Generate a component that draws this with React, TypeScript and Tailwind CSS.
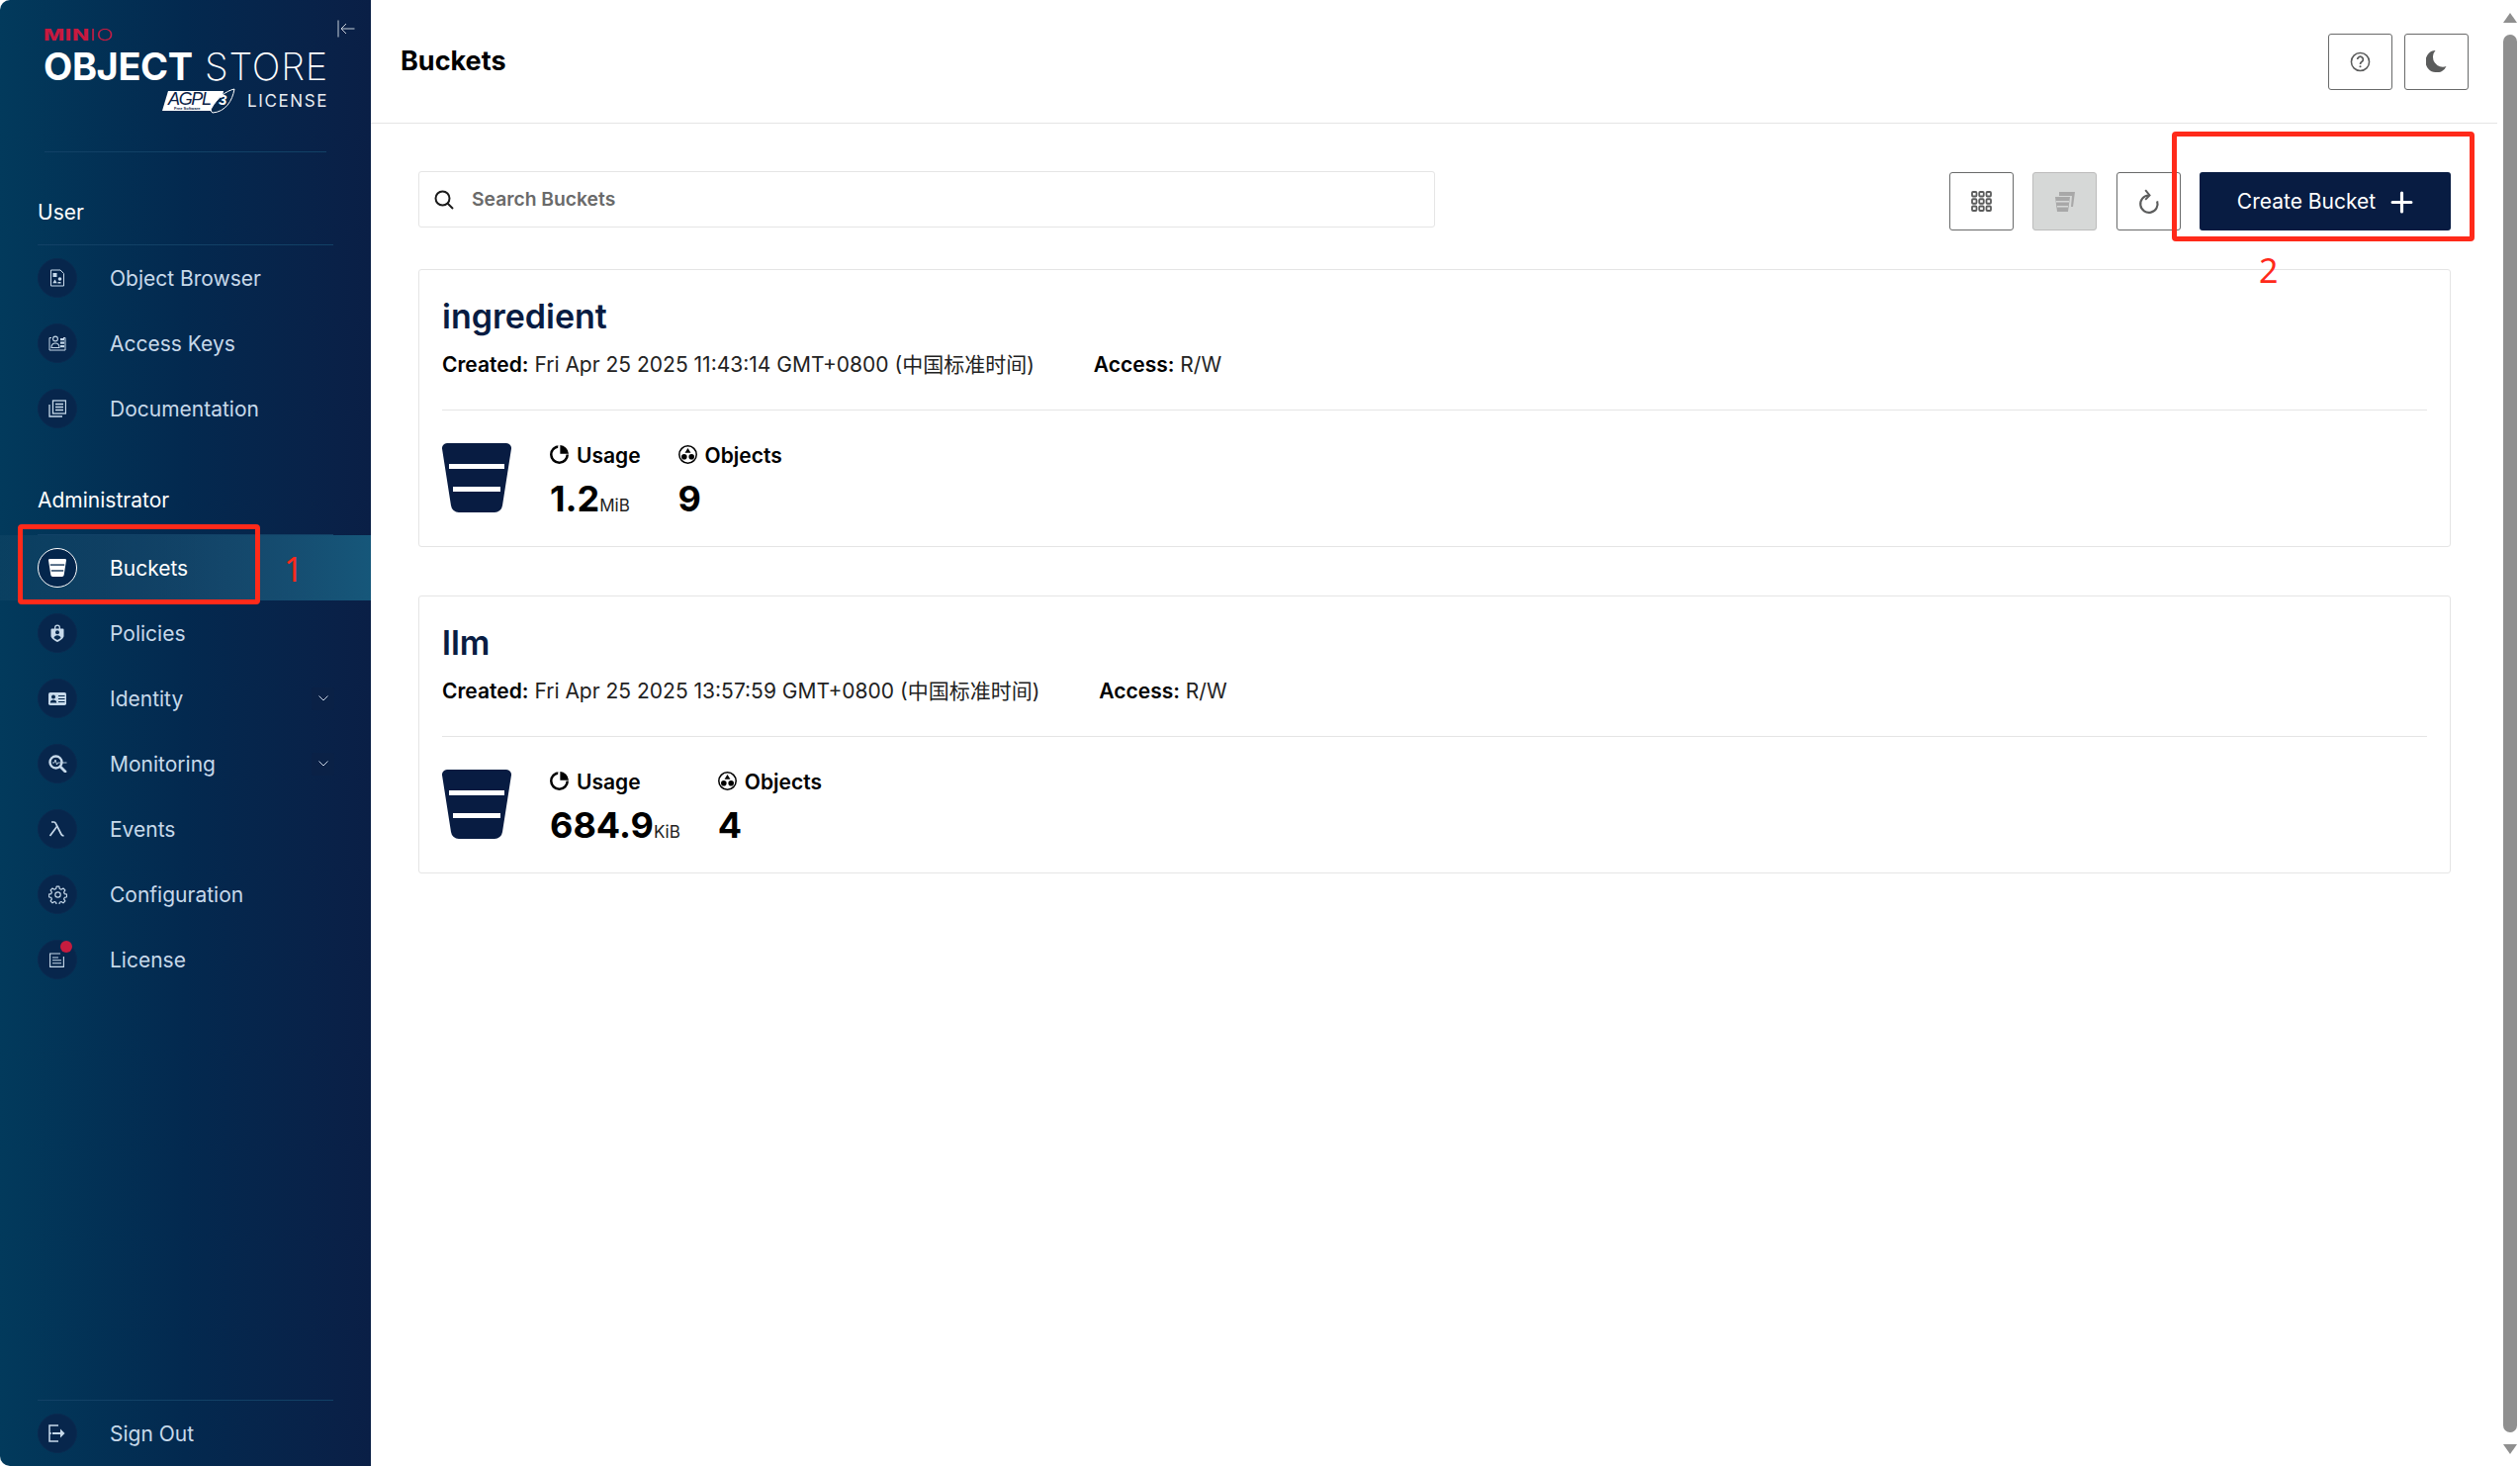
import type { ReactNode } from 'react';

const BucketShape = ({ className, stripe = '#fff' }: { className?: string; stripe?: string }) => (
  <svg viewBox="0 0 70 70" className={className}>
    <path d="M5 0h60a5 5 0 0 1 5 5.500L61 63a8 8 0 0 1-8 7H17a8 8 0 0 1-8-7L0 5.500A5 5 0 0 1 5 0Z" fill="currentColor" />
    <rect x="7" y="21" width="56" height="5" fill={stripe} />
    <rect x="11" y="44" width="48" height="5" fill={stripe} />
  </svg>
);

const ObjectBrowserIcon = () => (
  <svg viewBox="0 0 18 18" className="w-[18px] h-[18px]" fill="currentColor">
    <path d="M2.500 1h9.500l3.500 3.500v12.500h-13Z" fill="none" stroke="currentColor" strokeWidth="1" />
    <rect x="4.500" y="4" width="4" height="4" />
    <circle cx="11.500" cy="10" r="1.800" />
    <path d="M6.500 10.500l2.200 3.800h-4.400Z" />
    <rect x="9.500" y="13" width="3" height="1.500" />
  </svg>
);
const AccessKeysIcon = () => (
  <svg viewBox="0 0 18 16" className="w-[18px] h-[16px]" fill="currentColor">
    <path d="M3 2.500H1v12.500h16V2.500h-2" fill="none" stroke="currentColor" strokeWidth="1" />
    <circle cx="7" cy="3.500" r="2.400" fill="none" stroke="currentColor" strokeWidth="1.100" />
    <path d="M3 12.500c0-3 1.800-4.500 4-4.500s4 1.500 4 4.500Z" fill="none" stroke="currentColor" strokeWidth="1.100" />
    <rect x="12" y="3" width="4" height="2.200" />
    <rect x="12" y="6.500" width="4" height="2.200" />
    <rect x="12" y="10" width="4" height="2.200" />
  </svg>
);
const DocumentationIcon = () => (
  <svg viewBox="0 0 18 18" className="w-[18px] h-[18px]" fill="none" stroke="currentColor">
    <rect x="4.500" y="1" width="13" height="13" strokeWidth="1.300" />
    <path d="M1 5v12h13" strokeWidth="1.300" />
    <path d="M7 4.500h8M7 7.500h8M7 10.500h8" strokeWidth="1.300" />
  </svg>
);
const PoliciesIcon = () => (
  <svg viewBox="0 0 14 18" className="w-[14px] h-[18px]" fill="currentColor">
    <path d="M4 5V3.500a3 3 0 0 1 6 0V5h-1.300V3.500a1.700 1.700 0 0 0-3.400 0V5Z" />
    <path d="M1.500 4.500h11a1 1 0 0 1 1 1V12c0 2-3.500 4.800-6.500 6-3-1.200-6.500-4-6.500-6V5.500a1 1 0 0 1 1-1Z" />
    <circle cx="7" cy="8.300" r="2" fill="#05284d" />
    <path d="M3.500 14c.4-2 1.800-2.800 3.500-2.800s3.100.8 3.500 2.800L7 16Z" fill="#05284d" />
  </svg>
);
const IdentityIcon = () => (
  <svg viewBox="0 0 18 13" className="w-[18px] h-[13px]" fill="currentColor">
    <rect x="0" y="0" width="18" height="13" rx="1.800" />
    <circle cx="5" cy="4.500" r="2" fill="#05284d" />
    <path d="M1.800 10.500c0-2.200 1.400-3 3.200-3s3.200.8 3.200 3Z" fill="#05284d" />
    <path d="M10 3.500h6.500M10 6.500h6.500M10 9.500h6.500" stroke="#05284d" strokeWidth="1" />
  </svg>
);
const MonitoringIcon = () => (
  <svg viewBox="0 0 19 18" className="w-[19px] h-[18px]" fill="none" stroke="currentColor">
    <circle cx="7.500" cy="7.500" r="6" strokeWidth="2.400" />
    <path d="M12 12l5 5" strokeWidth="2.800" strokeLinecap="round" />
    <path d="M4 8h2l1-3 1.500 5 1-2h9" strokeWidth="0.900" />
  </svg>
);
const EventsIcon = () => (
  <svg viewBox="0 0 18 16" className="w-[18px] h-[16px]" fill="none" stroke="currentColor">
    <path d="M3 1h2.500c1 0 1.500.5 2 1.700L13 13.500c.5 1 1 1.300 2.500 1.300" strokeWidth="1.700" />
    <path d="M8.600 5.500L1.500 15" strokeWidth="1.700" />
  </svg>
);
const ConfigurationIcon = () => (
  <svg viewBox="0 0 24 24" className="w-[19px] h-[19px]" fill="none" stroke="currentColor" strokeWidth="1.500" strokeLinejoin="round">
    <circle cx="12" cy="12" r="3.400" />
    <path d="M10.300 2h3.400l.6 3 2 .9 2.600-1.600 2.400 2.400-1.600 2.600.8 2 3 .7v3.400l-3 .7-.8 2 1.600 2.500-2.400 2.400-2.600-1.600-2 .9-.6 3h-3.400l-.7-3-1.900-.9-2.600 1.600-2.400-2.400 1.600-2.500-.9-2-3-.7v-3.400l3-.7.9-2-1.600-2.600 2.400-2.400 2.600 1.600 1.900-.9Z" transform="translate(0 -.5) scale(1 1)" />
  </svg>
);
const LicenseIcon = () => (
  <svg viewBox="0 0 16 15" className="w-[16px] h-[15px]" fill="none" stroke="currentColor" strokeWidth="1.100">
    <path d="M11 1H.6v13.400h13.800V4" />
    <path d="M3 5h6M3 7.800h9M3 10.800h9" />
  </svg>
);
const SignOutIcon = () => (
  <svg viewBox="0 0 18 18" className="w-[18px] h-[18px]" fill="none" stroke="currentColor" strokeWidth="1.500">
    <path d="M10 1H1v16h9" />
    <path d="M1 9h2" />
    <path d="M4 9h9" strokeWidth="2" />
    <path d="M12 4.500L16.500 9 12 13.500" fill="currentColor" stroke="none" />
  </svg>
);

const Chevron = () => (
  <span className="ml-auto w-[23px] h-[23px] rounded-[2px] bg-[#0a2146] flex items-center justify-center">
    <svg viewBox="0 0 10 6" className="w-[10px] h-[6px]" fill="none" stroke="#c7d6e6" strokeWidth="1">
      <path d="M.5.500L5 5 9.500.500" />
    </svg>
  </span>
);

function NavItem({ icon, label, active, chevron, badge }: { icon: ReactNode; label: string; active?: boolean; chevron?: boolean; badge?: boolean }) {
  return (
    <div className={`h-[66px] shrink-0 flex items-center pl-[38px] pr-[37px] ${active ? 'bg-linear-to-r from-[#ffffff08] to-[#16577a]' : ''}`}>
      <span
        className={`relative h-10 w-10 shrink-0 rounded-full flex items-center justify-center ${active ? 'border border-white bg-[#04264c] text-white' : 'border border-[#0a2a50] bg-[#07264c] text-[#c7d9ea]'}`}
      >
        {icon}
        {badge && <span className="absolute top-[0px] right-[4px] w-[12px] h-[12px] rounded-full bg-[#c51c3f]" />}
      </span>
      <span className={`ml-[33px] text-[21px] leading-none ${active ? 'text-white' : 'text-[#c7d9ea]'}`}>{label}</span>
      {chevron && <Chevron />}
    </div>
  );
}

function Logo() {
  return (
    <div className="relative h-[153px] shrink-0">
      <button className="absolute left-[341px] top-[20px] text-[#c7d0da]">
        <svg viewBox="0 0 18 18" className="w-[18px] h-[18px]" fill="none" stroke="currentColor" strokeWidth="1">
          <path d="M1 .500v17M17.500 9H4M9 4L4 9l5 5" />
        </svg>
      </button>
      <div className="pl-[44px] pt-[26px] w-[332px]">
        <div className="text-[#c8193f] text-[16px] leading-[18px] tracking-[0.5px] flex origin-left scale-x-[1.4]">
          <span className="font-extrabold">MIN</span>
          <span className="font-light">IO</span>
        </div>
        <div className="text-white text-[38px] leading-[38px] mt-[4px] whitespace-nowrap flex justify-between">
          <span className="font-bold tracking-[-0.4px]">OBJECT</span>
          <span className="font-extralight tracking-[0.8px]">STORE</span>
        </div>
        <div className="flex items-center justify-end mt-[3px]">
          <svg viewBox="0 0 74 26" className="w-[74px] h-[26px] mr-[12px]">
            <path d="M6 3h56l-4 20H0Z" fill="#fff" />
            <text x="6" y="17" fontSize="18" fontStyle="italic" fontFamily="Liberation Sans" fill="#0a2146" textLength="44">AGPL</text>
            <text x="12" y="22" fontSize="4" fontWeight="700" fontFamily="Liberation Sans" fill="#0a2146">Free Software</text>
            <path d="M50 20c6-10 14-17 23-19-2 12-9 23-22 24-2-1-2-3-1-5Z" fill="#05284d" stroke="#fff" strokeWidth="1" />
            <text x="57" y="17" fontSize="15" fontWeight="700" fontStyle="italic" fontFamily="Liberation Sans" fill="#fff">3</text>
          </svg>
          <span className="text-[#e8edf2] text-[17px] leading-[22px] tracking-[1.600px]">LICENSE</span>
        </div>
      </div>
    </div>
  );
}

function Sidebar() {
  return (
    <aside className="w-[375px] shrink-0 h-full flex flex-col rounded-l-[10px] bg-linear-to-r from-[#023a5c] via-[#03294f] to-[#0a1f46]">
      <Logo />
      <div className="mx-[45px] h-px bg-[#124166]" />
      <div className="mx-[38px] mt-[41px] h-[53px] border-b border-[#124166] text-white text-[21px] leading-[40px]">User</div>
      <NavItem icon={<ObjectBrowserIcon />} label="Object Browser" />
      <NavItem icon={<AccessKeysIcon />} label="Access Keys" />
      <NavItem icon={<DocumentationIcon />} label="Documentation" />
      <div className="mx-[38px] mt-[40px] h-[55px] border-b border-[#124166] text-white text-[21px] leading-[40px]">Administrator</div>
      <NavItem active icon={<BucketShape className="w-[18px] h-[18px]" stripe="#04264c" />} label="Buckets" />
      <NavItem icon={<PoliciesIcon />} label="Policies" />
      <NavItem chevron icon={<IdentityIcon />} label="Identity" />
      <NavItem chevron icon={<MonitoringIcon />} label="Monitoring" />
      <NavItem icon={<EventsIcon />} label="Events" />
      <NavItem icon={<ConfigurationIcon />} label="Configuration" />
      <NavItem badge icon={<LicenseIcon />} label="License" />
      <div className="mt-auto mx-[38px] h-px bg-[#124166]" />
      <NavItem icon={<SignOutIcon />} label="Sign Out" />
    </aside>
  );
}

const IconButton = ({ children, disabled, className }: { children: ReactNode; disabled?: boolean; className?: string }) => (
  <button className={`w-[65px] flex items-center justify-center rounded-[3px] border ${disabled ? 'bg-[#d6d8d7] border-[#bcbcbc] text-[#a8a8a8]' : 'bg-white border-[#696a6a] text-[#5b5c5c]'} ${className ?? ''}`}>
    {children}
  </button>
);

const UsageIcon = () => (
  <svg viewBox="1 1 18 18" className="w-[19px] h-[19px] shrink-0" fill="currentColor">
    <path d="M10 1a9 9 0 1 0 9 9h-2.400A6.600 6.600 0 1 1 8.800 3.500V1.100Z" />
    <path d="M10.800 1v8.200H19A9 9 0 0 0 10.800 1Z" />
  </svg>
);
const ObjectsIcon = () => (
  <svg viewBox="0.500 0.500 19 19" className="w-[19px] h-[19px] shrink-0" fill="none" stroke="currentColor">
    <circle cx="10" cy="10" r="8.700" strokeWidth="1.500" />
    <path d="M10 3.500l3 4.800H7Z" fill="currentColor" stroke="none" />
    <circle cx="6.300" cy="12.300" r="2.800" fill="currentColor" stroke="none" />
    <circle cx="13.700" cy="12.300" r="2.800" fill="currentColor" stroke="none" />
  </svg>
);

function Stat({ icon, label, value, unit }: { icon: ReactNode; label: string; value: string; unit?: string }) {
  return (
    <div className="flex flex-col">
      <div className="flex items-center gap-[8px] h-[24px] mt-[1px] text-[21px] font-semibold text-black">
        <span className="-mt-[4px]">{icon}</span>
        {label}
      </div>
      <div className="mt-[10px] h-[42px] leading-[42px] text-[36px] font-bold text-black whitespace-nowrap">
        {value}
        <span className="text-[17px] font-normal text-[#222]">{unit}</span>
      </div>
    </div>
  );
}

function BucketCard({ name, created, usage, unit, objects }: { name: string; created: string; usage: string; unit: string; objects: string }) {
  return (
    <div className="border border-[#e5e5e5] rounded-[3px] h-[281px] pt-[23px] px-[23px]">
      <div className="h-[48px] leading-[48px] text-[34px] font-semibold text-[#081c42]">{name}</div>
      <div className="flex gap-[60px] mt-[13px] h-[24px] leading-[24px] text-[21px] text-[#222] whitespace-nowrap">
        <span><b className="font-semibold text-black">Created:</b> {created}</span>
        <span><b className="font-semibold text-black">Access:</b> R/W</span>
      </div>
      <div className="h-px bg-[#e5e5e5] mt-[33px]" />
      <div className="flex mt-[33px] gap-[39px]">
        <BucketShape className="w-[70px] h-[70px] text-[#081c42] shrink-0" />
        <div className="flex gap-[38px]">
          <Stat icon={<UsageIcon />} label="Usage" value={usage} unit={unit} />
          <Stat icon={<ObjectsIcon />} label="Objects" value={objects} />
        </div>
      </div>
    </div>
  );
}

function Scrollbar() {
  return (
    <div className="w-[23px] shrink-0 h-full flex flex-col items-center pl-[6px] pr-[3px] pt-[13px] pb-[12px]">
      <div className="w-0 h-0 border-x-[7px] border-x-transparent border-b-[10px] border-b-[#8f8f8f]" />
      <div className="w-[14px] flex-1 mt-[12px] mb-[12px] rounded-full bg-[#8f8f8f]" />
      <div className="w-0 h-0 border-x-[7px] border-x-transparent border-t-[10px] border-t-[#8f8f8f]" />
    </div>
  );
}

export default function App() {
  return (
    <div className="relative h-screen w-full flex overflow-hidden bg-white font-['Inter','Noto_Sans_CJK_SC',sans-serif]">
      <Sidebar />
      <main className="flex-1 min-w-0 flex flex-col">
        <header className="h-[125px] shrink-0 border-b border-[#e5e5e5] pl-[30px] pr-[29px] flex items-center">
          <h1 className="text-[27px] font-bold text-black">Buckets</h1>
          <div className="ml-auto flex gap-[12px] h-[57px]">
            <IconButton>
              <svg viewBox="0 0 22 22" className="w-[21px] h-[21px]" fill="none" stroke="currentColor" strokeWidth="1.600">
                <circle cx="11" cy="11" r="9.500" />
                <path d="M8 8.500a3 3 0 1 1 4.500 2.600c-1 .6-1.500 1-1.500 2.400" strokeWidth="1.800" />
                <circle cx="11" cy="16" r="1.100" fill="currentColor" stroke="none" />
              </svg>
            </IconButton>
            <IconButton>
              <svg viewBox="0 0 22 22" className="w-[22px] h-[22px]" fill="currentColor">
                <path d="M9.500 0a10 11 0 0 0 0 22 10 10 0 0 0 11-6A10 10 0 0 1 9.500 0Z" />
              </svg>
            </IconButton>
          </div>
        </header>
        <div className="pt-[48px] pl-[48px] pr-[47px] flex flex-col">
          <div className="flex items-start h-[99px]">
            <div className="w-[1028px] h-[57px] border border-[#e5e5e5] rounded-[3px] flex items-center pl-[15px]">
              <svg viewBox="0 0 20 20" className="w-[20px] h-[20px]" fill="none" stroke="#1a1a1a" strokeWidth="2">
                <circle cx="8.500" cy="8.500" r="7" />
                <path d="M13.500 13.500L19 19" />
              </svg>
              <span className="ml-[18px] text-[19.300px] font-semibold text-[#6a6a6a]">Search Buckets</span>
            </div>
            <div className="ml-auto flex h-[59px] mt-[1px]">
              <IconButton>
                <svg viewBox="0 0 21 21" className="w-[21px] h-[21px]" fill="none" stroke="currentColor" strokeWidth="1.800">
                  <rect x="1" y="1" width="4.500" height="4.500" rx="1" />
                  <rect x="8.250" y="1" width="4.500" height="4.500" rx="1" />
                  <rect x="15.500" y="1" width="4.500" height="4.500" rx="1" />
                  <rect x="1" y="8.250" width="4.500" height="4.500" rx="1" />
                  <rect x="8.250" y="8.250" width="4.500" height="4.500" rx="1" />
                  <rect x="15.500" y="8.250" width="4.500" height="4.500" rx="1" />
                  <rect x="1" y="15.500" width="4.500" height="4.500" rx="1" />
                  <rect x="8.250" y="15.500" width="4.500" height="4.500" rx="1" />
                  <rect x="15.500" y="15.500" width="4.500" height="4.500" rx="1" />
                </svg>
              </IconButton>
              <IconButton disabled className="ml-[19px]">
                <svg viewBox="0 0 22 22" className="w-[22px] h-[22px]" fill="currentColor">
                  <path d="M5 1h16l-2 15h-2l1-11H5Z" />
                  <path d="M1 6h15l-2 15H3Z" />
                  <rect x="2" y="10" width="13" height="1.500" fill="#d6d8d7" />
                  <rect x="3" y="15" width="11" height="1.500" fill="#d6d8d7" />
                </svg>
              </IconButton>
              <IconButton className="ml-[20px]">
                <svg viewBox="0 0 20 24" className="w-[22px] h-[26px]" fill="none" stroke="currentColor" strokeWidth="2">
                  <path d="M17.500 11.500A8 8 0 1 1 9.500 6" />
                  <path d="M6.500 1l4 5-4 4" strokeWidth="1.800" />
                </svg>
              </IconButton>
              <button className="ml-[19px] w-[254px] pt-[1px] rounded-[3px] bg-[#081c42] text-white text-[21px] font-normal flex items-center justify-center gap-[15px]">
                Create Bucket
                <svg viewBox="0 0 22 22" className="w-[23px] h-[23px]" fill="none" stroke="currentColor" strokeWidth="3" strokeLinecap="round">
                  <path d="M11 2v18M2 11h18" />
                </svg>
              </button>
            </div>
          </div>
          <div className="flex flex-col gap-[49px]">
            <BucketCard name="ingredient" created="Fri Apr 25 2025 11:43:14 GMT+0800 (中国标准时间)" usage="1.2" unit="MiB" objects="9" />
            <BucketCard name="llm" created="Fri Apr 25 2025 13:57:59 GMT+0800 (中国标准时间)" usage="684.9" unit="KiB" objects="4" />
          </div>
        </div>
      </main>
      <Scrollbar />

      {/* red annotations drawn over the screenshot */}
      <div className="absolute left-[18px] top-[530px] w-[245px] h-[81px] border-[5px] border-[#ff2a1a] rounded-[4px]" />
      <span className="absolute left-[287px] top-[562px] text-[#ff2a1a] text-[34px] leading-[26px] font-['Noto_Sans']">1</span>
      <div className="absolute left-[2196px] top-[133px] w-[306px] h-[111px] border-[5px] border-[#ff2a1a] rounded-[4px]" />
      <span className="absolute left-[2284px] top-[260px] text-[#ff2a1a] text-[34px] leading-[26px] font-['Noto_Sans']">2</span>
    </div>
  );
}
